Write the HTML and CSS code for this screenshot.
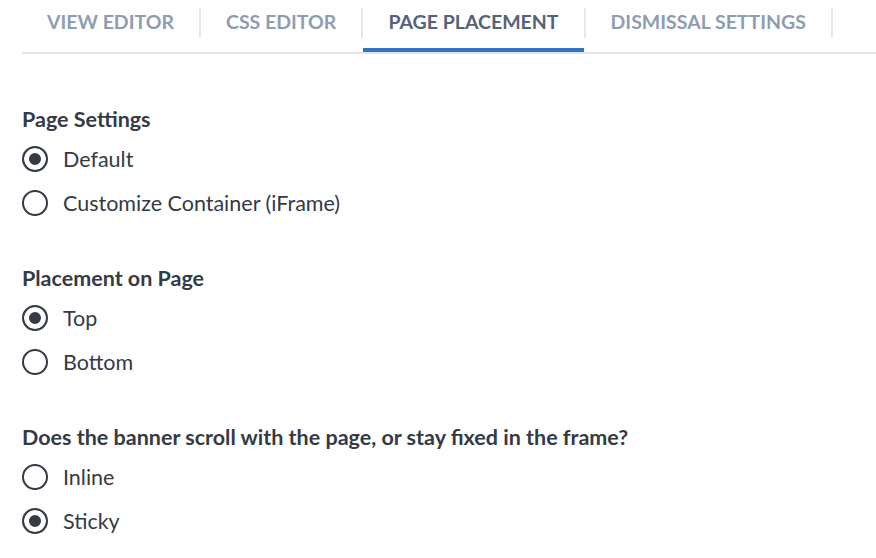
FILE: index.html
```html
<!DOCTYPE html>
<html lang="en">
	<head>
		<meta charset="UTF-8" />
		<meta name="viewport" content="width=device-width, initial-scale=1.0" />
		<title>Banner Settings</title>
		<link rel="stylesheet" href="styles.css">
	</head>
	<body>
		<nav class="tabs">
			<a class="tab">View Editor</a>
			<span class="tab-sep"></span>
			<a class="tab">CSS Editor</a>
			<span class="tab-sep"></span>
			<a class="tab active">Page Placement</a>
			<span class="tab-sep"></span>
			<a class="tab">Dismissal Settings</a>
			<span class="tab-sep"></span>
		</nav>

		<div class="settings">
			<fieldset class="group">
				<legend class="group-title">Page Settings</legend>
				<label class="option">
					<input type="radio" name="container" checked />
					<span>Default</span>
				</label>
				<label class="option">
					<input type="radio" name="container" />
					<span>Customize Container (iFrame)</span>
				</label>
			</fieldset>

			<fieldset class="group">
				<legend class="group-title">Placement on Page</legend>
				<label class="option">
					<input type="radio" name="placement" checked />
					<span>Top</span>
				</label>
				<label class="option">
					<input type="radio" name="placement" />
					<span>Bottom</span>
				</label>
			</fieldset>

			<fieldset class="group">
				<legend class="group-title">Does the banner scroll with the page, or stay fixed in the frame?</legend>
				<label class="option">
					<input type="radio" name="scroll" />
					<span>Inline</span>
				</label>
				<label class="option">
					<input type="radio" name="scroll" checked />
					<span>Sticky</span>
				</label>
			</fieldset>
		</div>
	</body>
</html>
```
FILE: styles.css
```css
body {
	font-family: Lato, "Liberation Sans", sans-serif;
	margin: 0;
	padding: 7px 0 0 22px;
	background: white;
	color: #343a46;
}
.tabs {
	display: flex;
	align-items: flex-start;
	border-bottom: 2px solid #e2e6eb;
}
.tab {
	padding: 0 25px 11px;
	line-height: 30px;
	font-size: 19.5px;
	font-weight: 700;
	text-transform: uppercase;
	color: #8f9db2;
	border-bottom: 4px solid transparent;
	cursor: pointer;
}
.tab.active {
	color: #56627a;
	border-bottom-color: #2f74c8;
}
.tab-sep {
	width: 2px;
	height: 30px;
	margin-top: 1px;
	background: #e4e8ec;
}
.settings {
	padding-top: 53px;
}
.group {
	border: none;
	margin: 0 0 41px;
	padding: 0;
}
.group-title {
	padding: 0;
	margin-bottom: 6px;
	line-height: 24px;
	font-size: 21.5px;
	font-weight: 700;
}
.option {
	display: flex;
	align-items: center;
	gap: 15px;
	height: 44px;
	font-size: 21.5px;
	cursor: pointer;
}
.option input {
	appearance: none;
	margin: 0;
	width: 26px;
	height: 26px;
	border: 2px solid #343a46;
	border-radius: 50%;
	background: white;
}
.option input:checked {
	background: #343a46;
	box-shadow: inset 0 0 0 5px white;
}
```
